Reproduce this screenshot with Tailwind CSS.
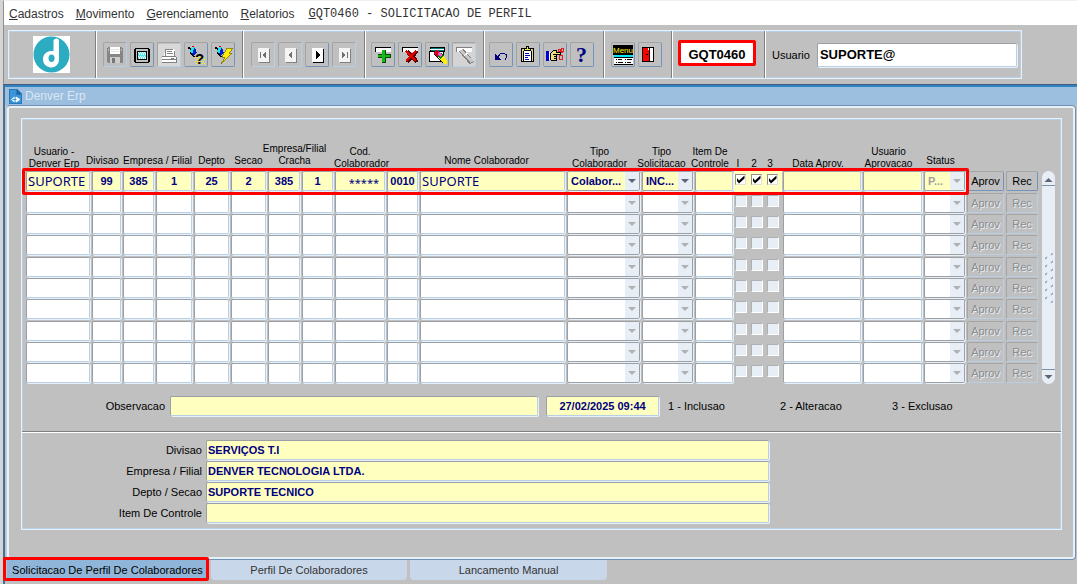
<!DOCTYPE html>
<html lang="pt-BR">
<head>
    <meta charset="UTF-8">
    <meta name="viewport" content="width=device-width, initial-scale=1.0">
    <title>Denver Erp</title>
    <script src="https://cdn.jsdelivr.net/npm/@tailwindcss/browser@4"></script>
</head>
<body class="flex min-h-screen flex-col border-l-3 border-[#d4d4d4] bg-[#c0c0c0] font-['Liberation_Sans',Arial,sans-serif] text-[11px] leading-3 text-black">
    <!-- Menu bar -->
    <nav class="flex h-[25px] items-center gap-3 border-t border-l border-t-[#f0f0f0] border-l-[#909090] bg-white pt-[2px] pl-[5px] text-[12px] leading-4 text-[#333]">
        <button type="button"><u>C</u>adastros</button>
        <button type="button"><u>M</u>ovimento</button>
        <button type="button"><u>G</u>erenciamento</button>
        <button type="button"><u>R</u>elatorios</button>
        <span class="pl-[2px] font-['Liberation_Mono',monospace]"><u>G</u>QT0460 - SOLICITACAO DE PERFIL</span>
    </nav>

    <!-- Toolbar -->
    <header class="flex h-[59px] border-l border-[#909090] pt-[5px] pl-1">
        <div class="flex h-[49px] items-stretch border border-[#e8f0f8] shadow-[inset_1px_1px_0_#b8cfe5,inset_-1px_-1px_0_#b8cfe5]">
            <div class="flex w-[86px] items-center justify-center pr-[2px]">
                <svg class="size-[37px]" viewBox="0 0 37 37">
                    <rect width="37" height="37" fill="#fff"/>
                    <circle cx="18.5" cy="18.5" r="18" fill="#2bacc0"/>
                    <path d="M20.500 5c0-1.500 1.500-2.500 3-2.500S26 3.500 26 5v18.500c0 4.500-3.500 8-8 8s-8-3.500-8-8.200 3.500-8.300 8-8.300c1 0 1.800.1 2.500.3zM18.500 18.500c-2 0-3 1.700-3 3.700 0 2.200 1.200 3.800 3 3.800 1.900 0 3.100-1.600 3.100-3.800s-1.200-3.700-3.100-3.700z" fill="#fff" fill-rule="evenodd"/>
                </svg>
            </div>

            <div class="flex items-center gap-[3px] border-l border-[#808080] px-[7px] shadow-[inset_1px_0_0_#fff]">
                <button type="button" aria-label="Salvar" disabled class="h-[25px] w-6 rounded-xs border border-[#a4a4a4] border-r-[#b8cfe5] border-b-[#b8cfe5]">
                    <svg class="size-[22px]" viewBox="0 0 22 22" shape-rendering="crispEdges">
                        <path d="M3 4h1V3h14v1h1v15H4v-1H3z" fill="#868686"/>
                        <path d="M6 3h10v7H6z" fill="#fff"/>
                        <path d="M7 5h8M7 7h8" stroke="#e4e4e4"/>
                        <path d="M6 13h10v6H6z" fill="#ccc"/>
                        <path d="M8 14h3v5H8z" fill="#777"/>
                        <path d="M4 5h1v2H4zM17 5h1v2h-1z" fill="#bbb"/>
                    </svg>
                </button>
                <button type="button" aria-label="Tela" class="h-[25px] w-6 rounded-xs border border-[#a4a4a4] border-r-[#7394b8] border-b-[#7394b8]">
                    <svg class="size-[22px]" viewBox="0 0 22 22" shape-rendering="crispEdges">
                        <path d="M4 4h14v1h1v13h-1v1H4v-1H3V5h1zM5 5v13h12V5z" fill="#000" fill-rule="evenodd"/>
                        <path d="M5 6h12v11H5z" fill="#c0c0c0"/>
                        <path d="M6 7h10v9H6z" fill="#000"/>
                        <path d="M7 8h8v7H7z" fill="#50e8f0"/>
                        <path d="M7 8.500h8M8 10.500h7M7 12.500h8M8 14.500h7M8 9.500h7M8 13.500h7" stroke="#fff" stroke-dasharray="1 1"/>
                    </svg>
                </button>
                <button type="button" aria-label="Imprimir" disabled class="h-[25px] w-6 rounded-xs border border-[#a4a4a4] border-r-[#b8cfe5] border-b-[#b8cfe5]">
                    <svg class="size-[22px]" viewBox="0 0 22 22" shape-rendering="crispEdges">
                        <path d="M0 0h22v22H0z" fill="#d8d8d8"/>
                        <path d="M7 5h8l2 2v6H6z" fill="#fff"/>
                        <path d="M7.500 5v7M7 5.500h8M16.500 7v5M9 7.500h5M9 9.500h6" fill="none" stroke="#888"/>
                        <path d="M4 13h15v5H4z" fill="#fff"/>
                        <path d="M4 12.500h14M4 15.500h14M4 18.500h15M18.500 13v5M13 14.500h3" stroke="#808080"/>
                    </svg>
                </button>
                <button type="button" aria-label="Entrar consulta" class="h-[25px] w-6 rounded-xs border border-[#a4a4a4] border-r-[#7394b8] border-b-[#7394b8]">
                    <svg class="size-[22px] overflow-visible" viewBox="0 0 22 22" shape-rendering="crispEdges">
                        <path d="M3 3h2v1h2v2H5V5H3z" fill="#000"/>
                        <path d="M6 6l4-2 2 5-4 3z" fill="#0020c8"/>
                        <path d="M6 4l4-1-3 7-2-2z" fill="#20e0f0"/>
                        <path d="M7 2h2v1H7z" fill="#e00000"/>
                        <path d="M5 8l3 4h2" fill="none" stroke="#000"/>
                        <path d="M10 13.500h10M11 15.500h10M10 17.500h10M11 19.500h10" stroke="#fff000" stroke-dasharray="1 1"/>
                        <text x="10" y="20" font-size="15" font-weight="bold" font-family="Liberation Sans">?</text>
                    </svg>
                </button>
                <button type="button" aria-label="Executar consulta" class="h-[25px] w-6 rounded-xs border border-[#a4a4a4] border-r-[#7394b8] border-b-[#7394b8]">
                    <svg class="size-[22px]" viewBox="0 0 22 22" shape-rendering="crispEdges">
                        <path d="M3 3h2v1h2v2H5V5H3z" fill="#000"/>
                        <path d="M6 6l4-2 2 5-4 3z" fill="#0020c8"/>
                        <path d="M6 4l4-1-3 7-2-2z" fill="#20e0f0"/>
                        <path d="M7 2h2v1H7z" fill="#e00000"/>
                        <path d="M5 8l3 4h2" fill="none" stroke="#000"/>
                        <path d="M15 4h6l-4 5h3L9 20l4-7h-3z" fill="#ffef00" stroke="#706800" stroke-width=".7"/>
                    </svg>
                </button>
            </div>

            <div class="flex items-center gap-[3px] border-l border-[#808080] pr-2 pl-[8px] shadow-[inset_1px_0_0_#fff]">
                <button type="button" aria-label="Primeiro" disabled class="h-[25px] w-6 rounded-xs border border-[#a4a4a4] border-r-[#b8cfe5] border-b-[#b8cfe5]">
                    <svg class="size-[22px]" viewBox="0 0 22 22" shape-rendering="crispEdges">
                        <path d="M7 5h11v14H7z" fill="#808080"/><path d="M6 4h11v14H6z" fill="#f4f4f4"/>
                        <path d="M8 8h1v6H8zM14 8v6h-1v-1h-1v-1h-1v-2h1V9h1V8z" fill="#707070"/>
                    </svg>
                </button>
                <button type="button" aria-label="Anterior" disabled class="h-[25px] w-6 rounded-xs border border-[#a4a4a4] border-r-[#b8cfe5] border-b-[#b8cfe5]">
                    <svg class="size-[22px]" viewBox="0 0 22 22" shape-rendering="crispEdges">
                        <path d="M7 5h11v14H7z" fill="#808080"/><path d="M6 4h11v14H6z" fill="#f4f4f4"/>
                        <path d="M13 8v6h-1v-1h-1v-1h-1v-2h1V9h1V8z" fill="#707070"/>
                    </svg>
                </button>
                <button type="button" aria-label="Proximo" class="h-[25px] w-6 rounded-xs border border-[#a4a4a4] border-r-[#7394b8] border-b-[#7394b8]">
                    <svg class="size-[22px]" viewBox="0 0 22 22" shape-rendering="crispEdges">
                        <path d="M7 5h11v14H7z" fill="#000"/><path d="M6 4h11v14H6z" fill="#fff"/>
                        <path d="M10 7v8h1v-1h1v-1h1v-1h1v-2h-1V9h-1V8h-1V7z" fill="#000"/>
                    </svg>
                </button>
                <button type="button" aria-label="Ultimo" disabled class="h-[25px] w-6 rounded-xs border border-[#a4a4a4] border-r-[#b8cfe5] border-b-[#b8cfe5]">
                    <svg class="size-[22px]" viewBox="0 0 22 22" shape-rendering="crispEdges">
                        <path d="M7 5h11v14H7z" fill="#808080"/><path d="M6 4h11v14H6z" fill="#f4f4f4"/>
                        <path d="M14 8h1v6h-1zM9 8v6h1v-1h1v-1h1v-2h-1V9h-1V8z" fill="#707070"/>
                    </svg>
                </button>
            </div>

            <div class="flex items-center gap-[3px] border-l border-[#808080] pr-[7px] pl-[6px] shadow-[inset_1px_0_0_#fff]">
                <button type="button" aria-label="Inserir" class="h-[25px] w-6 rounded-xs border border-[#a4a4a4] border-r-[#7394b8] border-b-[#7394b8]">
                    <svg class="size-[22px]" viewBox="0 0 22 22" shape-rendering="crispEdges">
                        <path d="M3 3h16v5H3z" fill="#000"/><path d="M4 4h15v4H4z" fill="#fff"/>
                        <path d="M10 6h4v4h5v4h-5v5h-4v-5H6v-4h4z" fill="#004800"/>
                        <path d="M10 6h3v5h5v2h-5v5h-3v-5H6v-2h4z" fill="#18b818"/>
                    </svg>
                </button>
                <button type="button" aria-label="Excluir" class="h-[25px] w-6 rounded-xs border border-[#a4a4a4] border-r-[#7394b8] border-b-[#7394b8]">
                    <svg class="size-[22px]" viewBox="0 0 22 22" shape-rendering="crispEdges">
                        <path d="M3 3h16v5H3z" fill="#000"/><path d="M4 4h15v4H4z" fill="#fff"/>
                        <path d="M8 7l10 11M18 7L8 18" stroke="#600000" stroke-width="4"/>
                        <path d="M7 7l10 10M17 7L7 17" stroke="#e00000" stroke-width="2"/>
                    </svg>
                </button>
                <button type="button" aria-label="Limpar" class="h-[25px] w-6 rounded-xs border border-[#a4a4a4] border-r-[#7394b8] border-b-[#7394b8]">
                    <svg class="size-[22px]" viewBox="0 0 22 22" shape-rendering="crispEdges">
                        <path d="M4.500 3.500h14v4h-14z" fill="#008080" stroke="#000"/>
                        <path d="M3.500 7.500h14v10h-14z" fill="#fff" stroke="#000"/>
                        <path d="M4 5.500h14" stroke="#fff"/>
                        <path d="M8 8l3-2 4 3-3 4-4-3z" fill="#d00028"/>
                        <path d="M11 12l4-4 3 4-3 4z" fill="#008000"/><path d="M11 10l2-2 3 3-2 2z" fill="#ff50d0"/>
                        <path d="M14 15l4-3 3 5v3h-3z" fill="#fff000"/>
                        <path d="M8 10l5 5 4 4" fill="none" stroke="#000"/>
                    </svg>
                </button>
                <button type="button" aria-label="Editar" disabled class="h-[25px] w-6 rounded-xs border border-[#a4a4a4] border-r-[#b8cfe5] border-b-[#b8cfe5]">
                    <svg class="size-[22px]" viewBox="0 0 22 22" shape-rendering="crispEdges">
                        <path d="M0 0h22v22H0z" fill="#d4d4d4"/>
                        <path d="M3 3h16v5H3z" fill="#808080"/><path d="M4 4h15v4H4z" fill="#fff"/>
                        <path d="M8 6l11 13" stroke="#808080" stroke-width="5"/>
                        <path d="M8 6l11 12" stroke="#c8c8c8" stroke-width="3"/>
                        <path d="M11 12l4-3" stroke="#fff"/>
                    </svg>
                </button>
            </div>

            <div class="flex items-center gap-[3px] border-l border-[#808080] pr-[9px] pl-[5px] shadow-[inset_1px_0_0_#fff]">
                <button type="button" aria-label="Desfazer" class="h-[25px] w-6 rounded-xs border border-[#a4a4a4] border-r-[#7394b8] border-b-[#7394b8]">
                    <svg class="size-[22px]" viewBox="0 0 22 22" shape-rendering="crispEdges">
                        <path d="M5 10v6h6l-2-2-2-2z" fill="#000080"/>
                        <path d="M8 12.500l2-2M10 9.500h5M15 10.500h2M16.500 11v3M15.500 14v2" fill="none" stroke="#000080"/>
                    </svg>
                </button>
                <button type="button" aria-label="Lista" class="h-[25px] w-6 rounded-xs border border-[#a4a4a4] border-r-[#7394b8] border-b-[#7394b8]">
                    <svg class="size-[22px]" viewBox="0 0 22 22" shape-rendering="crispEdges">
                        <path d="M4.500 4.500h12v13h-12z" fill="#e0d890" stroke="#000"/>
                        <path d="M6 7h9v10H6z" fill="#fff"/><path d="M6.500 7v10M14.500 7v10" stroke="#000"/>
                        <path d="M7.500 6.500v-2h2v-2h2v2h2v2z" fill="#f0e868" stroke="#000"/>
                        <path d="M8 9.500h4M8 11.500h5M8 13.500h3M8 15.500h4" stroke="#0000c0"/>
                    </svg>
                </button>
                <button type="button" aria-label="Chave" class="h-[25px] w-6 rounded-xs border border-[#a4a4a4] border-r-[#7394b8] border-b-[#7394b8]">
                    <svg class="size-[22px]" viewBox="0 0 22 22" shape-rendering="crispEdges">
                        <path d="M2 7h3v10H2z" fill="#0000d0"/><path d="M5 8h1v8H5z" fill="#fff"/>
                        <path d="M6.500 9.500l3-3h3v2h4v2h-4v6h-5l-1-1z" fill="#f0e080" stroke="#000"/>
                        <path d="M9 10.500h4M10 12.500h3M10 14.500h3" stroke="#000"/>
                        <path d="M14.500 5.500h2v2h-2zM17 8.500h2M17.500 4.500h2v3h-2zM15.500 11.500h3v4h-3z" fill="none" stroke="#e02020"/>
                    </svg>
                </button>
                <button type="button" aria-label="Ajuda" class="h-[25px] w-6 rounded-xs border border-[#a4a4a4] border-r-[#7394b8] border-b-[#7394b8]">
                    <svg class="size-[22px] overflow-visible" viewBox="0 0 22 22">
                        <text x="5" y="18" font-size="22" font-weight="bold" font-family="Liberation Serif" fill="#000080">?</text>
                    </svg>
                </button>
            </div>

            <div class="flex items-center gap-[3px] border-l border-[#808080] pr-[9px] pl-[7px] shadow-[inset_1px_0_0_#fff]">
                <button type="button" aria-label="Menu" class="h-[25px] w-6 rounded-xs border border-[#a4a4a4] border-r-[#7394b8] border-b-[#7394b8]">
                    <svg class="size-[22px] overflow-visible" viewBox="0 0 22 22" shape-rendering="crispEdges">
                        <path d="M1 1h20v10H1z" fill="#000"/>
                        <text x="1" y="9" font-size="8" font-family="Liberation Sans" fill="#fff000">Menu</text>
                        <path d="M2 11h19v2H2z" fill="#00e8f0"/><path d="M2 13h19v8H2z" fill="#fff"/>
                        <path d="M2 13.500h19M4 15.500h1M6 15.500h4M13 15.500h1M15 15.500h5M4 18.500h1M6 18.500h5M13 18.500h1M15 18.500h4M2 20.500h19" stroke="#000"/>
                    </svg>
                </button>
                <button type="button" aria-label="Sair" class="h-[25px] w-6 rounded-xs border border-[#a4a4a4] border-r-[#7394b8] border-b-[#7394b8]">
                    <svg class="size-[22px]" viewBox="0 0 22 22" shape-rendering="crispEdges">
                        <path d="M3.500 3.500h11v14h-11z" fill="#fff" stroke="#000"/>
                        <path d="M3 4h6v2h1v12H8v-1H3z" fill="#ff0000"/>
                        <path d="M3.500 4v13M3 17.500h7M10.500 4v14M7 10.500h2" stroke="#000"/>
                    </svg>
                </button>
            </div>

            <div class="flex w-[93px] items-center border-l border-[#808080] pb-1 pl-[6px] shadow-[inset_1px_0_0_#fff]">
                <input type="text" aria-label="Programa" value="GQT0460" class="h-[26px] w-[78px] rounded-xs border-3 border-[#ff0000] bg-white pt-[3px] text-center text-[13px] font-bold outline-none">
            </div>

            <div class="flex items-center gap-[7px] border-l border-[#808080] px-1 pl-[7px] shadow-[inset_1px_0_0_#fff]">
                <label for="usuario">Usuario</label>
                <input id="usuario" type="text" value="SUPORTE@" class="h-6 w-50 rounded-xs border border-[#9aa0a6] border-r-[#b8cfe5] border-b-[#b8cfe5] bg-white pl-[2px] text-[13px] font-bold shadow-[1px_1px_0_#e8f0f8] outline-none">
            </div>
        </div>
    </header>

    <!-- Window -->
    <main class="flex flex-1 flex-col border-t border-l-2 border-t-[#4a5a78] border-l-[#44709f]">
        <div class="flex h-5 items-center gap-[3px] border-t-2 border-[#2f82c4] bg-[#9dbfdf] pl-[4px] text-[12px] leading-4 text-[#d8e6f4]">
            <svg class="h-[15px] w-[13px]" viewBox="0 0 13 15">
                <path d="M0 0h8l5 5v10H0z" fill="#2878b8"/><path d="M1 1h6v5h5v8H1z" fill="#3c94d8"/><path d="M8 0l5 5H8z" fill="#1868a8"/>
                <path d="M5.500 8l-3 2.500 3 2.500M7 8l4 2.500L7 13z" fill="#fff" stroke="#fff" stroke-width=".8"/><path d="M3.500 10.500h4" stroke="#3c94d8"/>
            </svg>
            <h1>Denver Erp</h1>
        </div>

        <div class="mx-px rounded-sm border border-[#6f93b8] border-l-[#b8cfe5] pb-[29px] shadow-[inset_0_0_0_2px_#e8f0f8]">
            <section class="mt-3 mr-[13px] ml-[14px] border border-[#e8f0f8] shadow-[inset_1px_1px_0_#b8cfe5,inset_-1px_-1px_0_#b8cfe5]">
                <div class="flex items-end pt-[22px] pr-[6px] pl-[3px]">
                    <div class="relative min-w-0 flex-1">
                        <table class="w-full table-fixed border-separate border-spacing-0">
                            <colgroup>
                                <col class="w-[66px]"><col class="w-[31px]"><col class="w-[33px]"><col class="w-[38px]"><col class="w-[37px]"><col class="w-[37px]">
                                <col class="w-[34px]"><col class="w-[33px]"><col class="w-[52px]"><col class="w-[33px]"><col>
                                <col class="w-[75px]"><col class="w-[53px]"><col class="w-[40px]"><col class="w-4"><col class="w-4"><col class="w-4">
                                <col class="w-[80px]"><col class="w-[61px]"><col class="w-[43px]"><col class="w-[39px]"><col class="w-[34px]">
                            </colgroup>
                            <thead class="text-[10px] whitespace-nowrap">
                                <tr class="h-[29px] *:p-0 *:align-bottom *:font-normal">
                                    <th><div class="-ml-2">Usuario -<br>Denver Erp</div></th>
                                    <th><div class="-ml-2 pb-[3px]">Divisao</div></th>
                                    <th colspan="2"><div class="pb-[3px]">Empresa / Filial</div></th>
                                    <th><div class="pb-[3px]">Depto</div></th>
                                    <th><div class="pb-[3px]">Secao</div></th>
                                    <th colspan="2"><div class="-ml-3 pb-[3px]">Empresa/Filial<br>Cracha</div></th>
                                    <th><div>Cod.<br>Colaborador</div></th>
                                    <th></th>
                                    <th><div class="-ml-3 pb-[3px]">Nome Colaborador</div></th>
                                    <th><div class="-ml-2">Tipo<br>Colaborador</div></th>
                                    <th><div class="-ml-3">Tipo<br>Solicitacao</div></th>
                                    <th><div class="-ml-2">Item De<br>Controle</div></th>
                                    <th><div class="-ml-2">I</div></th>
                                    <th><div class="-ml-2">2</div></th>
                                    <th><div class="-ml-2">3</div></th>
                                    <th><div class="-ml-2">Data Aprov.</div></th>
                                    <th><div class="-ml-2">Usuario<br>Aprovacao</div></th>
                                    <th><div class="-ml-2 pb-[3px]">Status</div></th>
                                    <th colspan="2"></th>
                                </tr>
                            </thead>
                            <tbody id="linhas" class="text-[#000080]">
                                <tr class="h-[22px] *:px-px *:py-0">
                                    <td><input aria-label="Usuario" value="SUPORTE" class="block h-5 w-full rounded-xs border border-[#9aa0a6] border-r-[#b8cfe5] border-b-[#b8cfe5] bg-[#ffffc0] pl-px font-['Noto_Sans',sans-serif] text-[13px] shadow-[1px_1px_0_#e8f0f8] outline-none"></td>
                                    <td><input aria-label="Divisao" value="99" class="block h-5 w-full rounded-xs border border-[#9aa0a6] border-r-[#b8cfe5] border-b-[#b8cfe5] bg-[#ffffc0] text-center font-bold shadow-[1px_1px_0_#e8f0f8] outline-none"></td>
                                    <td><input aria-label="Empresa" value="385" class="block h-5 w-full rounded-xs border border-[#9aa0a6] border-r-[#b8cfe5] border-b-[#b8cfe5] bg-[#ffffc0] text-center font-bold shadow-[1px_1px_0_#e8f0f8] outline-none"></td>
                                    <td><input aria-label="Filial" value="1" class="block h-5 w-full rounded-xs border border-[#9aa0a6] border-r-[#b8cfe5] border-b-[#b8cfe5] bg-[#ffffc0] text-center font-bold shadow-[1px_1px_0_#e8f0f8] outline-none"></td>
                                    <td><input aria-label="Depto" value="25" class="block h-5 w-full rounded-xs border border-[#9aa0a6] border-r-[#b8cfe5] border-b-[#b8cfe5] bg-[#ffffc0] text-center font-bold shadow-[1px_1px_0_#e8f0f8] outline-none"></td>
                                    <td><input aria-label="Secao" value="2" class="block h-5 w-full rounded-xs border border-[#9aa0a6] border-r-[#b8cfe5] border-b-[#b8cfe5] bg-[#ffffc0] text-center font-bold shadow-[1px_1px_0_#e8f0f8] outline-none"></td>
                                    <td><input aria-label="Empresa cracha" value="385" class="block h-5 w-full rounded-xs border border-[#9aa0a6] border-r-[#b8cfe5] border-b-[#b8cfe5] bg-[#ffffc0] text-center font-bold shadow-[1px_1px_0_#e8f0f8] outline-none"></td>
                                    <td><input aria-label="Filial cracha" value="1" class="block h-5 w-full rounded-xs border border-[#9aa0a6] border-r-[#b8cfe5] border-b-[#b8cfe5] bg-[#ffffc0] text-center font-bold shadow-[1px_1px_0_#e8f0f8] outline-none"></td>
                                    <td><input aria-label="Cod. Colaborador" value="*****" class="block h-5 w-full rounded-xs border border-[#9aa0a6] border-r-[#b8cfe5] border-b-[#b8cfe5] bg-[#ffffc0] pt-[2px] pr-[5px] text-right font-['Noto_Sans',sans-serif] text-[11px] shadow-[1px_1px_0_#e8f0f8] outline-none"></td>
                                    <td><input aria-label="Digito" value="0010" class="block h-5 w-full rounded-xs border border-[#9aa0a6] border-r-[#b8cfe5] border-b-[#b8cfe5] bg-[#ffffc0] text-center font-bold shadow-[1px_1px_0_#e8f0f8] outline-none"></td>
                                    <td><input aria-label="Nome Colaborador" value="SUPORTE" class="block h-5 w-full rounded-xs border border-[#9aa0a6] border-r-[#b8cfe5] border-b-[#b8cfe5] bg-[#ffffc0] pl-px font-['Noto_Sans',sans-serif] text-[13px] shadow-[1px_1px_0_#e8f0f8] outline-none"></td>
                                    <td>
                                        <div class="flex h-5 rounded-xs border border-[#9aa0a6] bg-[#ffffc0] shadow-[1px_1px_0_#e8f0f8]">
                                            <select aria-label="Tipo Colaborador" class="min-w-0 flex-1 appearance-none pl-[3px] font-bold outline-none"><option>Colabor...</option></select>
                                            <svg class="h-full w-[14px] bg-[#e8eef6]" viewBox="0 0 14 18"><path d="M3 7h8l-4 4z" fill="#5c6478"/></svg>
                                        </div>
                                    </td>
                                    <td>
                                        <div class="flex h-5 rounded-xs border border-[#9aa0a6] bg-[#ffffc0] shadow-[1px_1px_0_#e8f0f8]">
                                            <select aria-label="Tipo Solicitacao" class="min-w-0 flex-1 appearance-none pl-[3px] font-bold outline-none"><option>INC...</option></select>
                                            <svg class="h-full w-[14px] bg-[#e8eef6]" viewBox="0 0 14 18"><path d="M3 7h8l-4 4z" fill="#5c6478"/></svg>
                                        </div>
                                    </td>
                                    <td><input aria-label="Item De Controle" class="block h-5 w-full rounded-xs border border-[#9aa0a6] border-r-[#b8cfe5] border-b-[#b8cfe5] bg-[#ffffc0] shadow-[1px_1px_0_#e8f0f8] outline-none"></td>
                                    <td class="bg-[#ffffc0] align-top">
                                        <div class="grid pt-1">
                                            <input type="checkbox" aria-label="Inclusao" checked class="col-start-1 row-start-1 size-[11px] appearance-none border border-[#909090] border-r-[#e0e0e0] border-b-[#e0e0e0] bg-white">
                                            <svg class="pointer-events-none col-start-1 row-start-1 size-[11px]" viewBox="0 0 11 11"><path d="M2 4v3l2 2.500 5.500-5V1.500l-5.500 5z" fill="#000"/></svg>
                                        </div>
                                    </td>
                                    <td class="bg-[#ffffc0] align-top">
                                        <div class="grid pt-1">
                                            <input type="checkbox" aria-label="Alteracao" checked class="col-start-1 row-start-1 size-[11px] appearance-none border border-[#909090] border-r-[#e0e0e0] border-b-[#e0e0e0] bg-white">
                                            <svg class="pointer-events-none col-start-1 row-start-1 size-[11px]" viewBox="0 0 11 11"><path d="M2 4v3l2 2.500 5.500-5V1.500l-5.500 5z" fill="#000"/></svg>
                                        </div>
                                    </td>
                                    <td class="bg-[#ffffc0] align-top">
                                        <div class="grid pt-1">
                                            <input type="checkbox" aria-label="Exclusao" checked class="col-start-1 row-start-1 size-[11px] appearance-none border border-[#909090] border-r-[#e0e0e0] border-b-[#e0e0e0] bg-white">
                                            <svg class="pointer-events-none col-start-1 row-start-1 size-[11px]" viewBox="0 0 11 11"><path d="M2 4v3l2 2.500 5.500-5V1.500l-5.500 5z" fill="#000"/></svg>
                                        </div>
                                    </td>
                                    <td><input aria-label="Data Aprov." class="block h-5 w-full rounded-xs border border-[#9aa0a6] border-r-[#b8cfe5] border-b-[#b8cfe5] bg-[#ffffc0] shadow-[1px_1px_0_#e8f0f8] outline-none"></td>
                                    <td><input aria-label="Usuario Aprovacao" class="block h-5 w-full rounded-xs border border-[#9aa0a6] border-r-[#b8cfe5] border-b-[#b8cfe5] bg-[#ffffc0] shadow-[1px_1px_0_#e8f0f8] outline-none"></td>
                                    <td>
                                        <div class="flex h-5 rounded-xs border border-[#9aa0a6] bg-[#ffffc0] shadow-[1px_1px_0_#e8f0f8]">
                                            <select aria-label="Status" class="min-w-0 flex-1 appearance-none pl-[3px] font-bold text-[#a0a0a0] outline-none"><option>P...</option></select>
                                            <svg class="h-full w-[14px] bg-[#e8eef6]" viewBox="0 0 14 18"><path d="M3 7h8l-4 4z" fill="#b0b0b0"/></svg>
                                        </div>
                                    </td>
                                    <td class="pl-[2px]"><button type="button" class="block h-5 w-full rounded-xs border border-[#a4a4a4] border-r-[#7394b8] border-b-[#7394b8] text-black">Aprov</button></td>
                                    <td><button type="button" class="block h-5 w-full rounded-xs border border-[#a4a4a4] border-r-[#7394b8] border-b-[#7394b8] text-black">Rec</button></td>
                                </tr>
                            </tbody>
                        </table>
                        <div class="pointer-events-none absolute top-[27px] right-[70px] -left-[3px] h-[27px] rounded-xs border-3 border-[#ff0000]"></div>
                    </div>

                    <!-- Scroll bar -->
                    <div class="ml-[3px] flex h-[213px] w-[13px] flex-col overflow-hidden rounded-full bg-[#e8eef6]">
                        <button type="button" aria-label="Subir" class="h-[15px] border-b border-[#8090a8]">
                            <svg class="h-[13px] w-[13px]" viewBox="0 0 13 13"><path d="M2.500 10h8l-4-4z" fill="#5c6478"/></svg>
                        </button>
                        <div class="flex flex-1 items-center justify-center">
                            <svg class="h-[50px] w-2" viewBox="0 0 8 50">
                                <path d="M0 6l2-2M6 2l2-2M0 14l2-2M6 10l2-2M0 22l2-2M6 18l2-2M0 30l2-2M6 26l2-2M0 38l2-2M6 34l2-2M0 46l2-2M6 42l2-2M6 50l2-2" stroke="#8c9cb4" stroke-width="1.200"/>
                            </svg>
                        </div>
                        <button type="button" aria-label="Descer" class="h-[15px] border-t border-[#8090a8]">
                            <svg class="h-[13px] w-[13px]" viewBox="0 0 13 13"><path d="M2.500 4h8l-4 4z" fill="#5c6478"/></svg>
                        </button>
                    </div>
                </div>

                <div class="flex h-[47px] items-center pr-2 pb-1">
                    <label for="observacao" class="w-[143px] text-right">Observacao</label>
                    <input id="observacao" class="ml-[5px] h-5 w-[368px] rounded-xs border border-[#9aa0a6] border-r-[#b8cfe5] border-b-[#b8cfe5] bg-[#ffffc0] shadow-[1px_1px_0_#e8f0f8] outline-none">
                    <input aria-label="Data" value="27/02/2025 09:44" class="ml-2 h-5 w-[113px] rounded-xs border border-[#9aa0a6] border-r-[#b8cfe5] border-b-[#b8cfe5] bg-[#ffffc0] text-center font-bold text-[#000080] shadow-[1px_1px_0_#e8f0f8] outline-none">
                    <span class="ml-[9px] w-28">1 - Inclusao</span>
                    <span class="w-28">2 - Alteracao</span>
                    <span class="w-28">3 - Exclusao</span>
                </div>

                <div class="grid grid-cols-[180px_563px] items-center gap-x-1 gap-y-px border-t border-[#808080] pt-2 pb-[6px] shadow-[inset_0_1px_0_#fff]">
                    <label for="divisao" class="text-right">Divisao</label>
                    <input id="divisao" value="SERVIÇOS T.I" class="h-5 rounded-xs border border-[#9aa0a6] border-r-[#b8cfe5] border-b-[#b8cfe5] bg-[#ffffc0] pl-px font-bold text-[#000080] shadow-[1px_1px_0_#e8f0f8] outline-none">
                    <label for="empresa" class="text-right">Empresa / Filial</label>
                    <input id="empresa" value="DENVER TECNOLOGIA LTDA." class="h-5 rounded-xs border border-[#9aa0a6] border-r-[#b8cfe5] border-b-[#b8cfe5] bg-[#ffffc0] pl-px font-bold text-[#000080] shadow-[1px_1px_0_#e8f0f8] outline-none">
                    <label for="depto" class="text-right">Depto / Secao</label>
                    <input id="depto" value="SUPORTE TECNICO" class="h-5 rounded-xs border border-[#9aa0a6] border-r-[#b8cfe5] border-b-[#b8cfe5] bg-[#ffffc0] pl-px font-bold text-[#000080] shadow-[1px_1px_0_#e8f0f8] outline-none">
                    <label for="item" class="text-right">Item De Controle</label>
                    <input id="item" class="h-5 rounded-xs border border-[#9aa0a6] border-r-[#b8cfe5] border-b-[#b8cfe5] bg-[#ffffc0] pl-px font-bold text-[#000080] shadow-[1px_1px_0_#e8f0f8] outline-none">
                </div>
            </section>
        </div>

        <!-- Tabs -->
        <div class="relative flex items-start gap-[3px] pl-[2px] text-[#333]" role="tablist">
            <button type="button" role="tab" aria-selected="true" class="h-5 w-[201px] bg-[#8fb5d8] text-black">Solicitacao De Perfil De Colaboradores</button>
            <button type="button" role="tab" class="h-5 w-[196px] rounded-b-sm bg-[#c8d7ea]">Perfil De Colaboradores</button>
            <button type="button" role="tab" class="h-5 w-[197px] rounded-b-sm bg-[#c8d7ea]">Lancamento Manual</button>
            <div class="pointer-events-none absolute -top-[3px] -left-[2px] h-6 w-[206px] rounded-xs border-3 border-[#ff0000]"></div>
        </div>
    </main>

    <template id="linha-vazia">
        <tr class="*:px-px *:py-0">
            <td><input aria-label="Usuario" class="block h-5 w-full rounded-xs border border-[#9aa0a6] border-r-[#b8cfe5] border-b-[#b8cfe5] bg-white shadow-[1px_1px_0_#e8f0f8] outline-none"></td>
            <td><input aria-label="Divisao" class="block h-5 w-full rounded-xs border border-[#9aa0a6] border-r-[#b8cfe5] border-b-[#b8cfe5] bg-white shadow-[1px_1px_0_#e8f0f8] outline-none"></td>
            <td><input aria-label="Empresa" class="block h-5 w-full rounded-xs border border-[#9aa0a6] border-r-[#b8cfe5] border-b-[#b8cfe5] bg-white shadow-[1px_1px_0_#e8f0f8] outline-none"></td>
            <td><input aria-label="Filial" class="block h-5 w-full rounded-xs border border-[#9aa0a6] border-r-[#b8cfe5] border-b-[#b8cfe5] bg-white shadow-[1px_1px_0_#e8f0f8] outline-none"></td>
            <td><input aria-label="Depto" class="block h-5 w-full rounded-xs border border-[#9aa0a6] border-r-[#b8cfe5] border-b-[#b8cfe5] bg-white shadow-[1px_1px_0_#e8f0f8] outline-none"></td>
            <td><input aria-label="Secao" class="block h-5 w-full rounded-xs border border-[#9aa0a6] border-r-[#b8cfe5] border-b-[#b8cfe5] bg-white shadow-[1px_1px_0_#e8f0f8] outline-none"></td>
            <td><input aria-label="Empresa cracha" class="block h-5 w-full rounded-xs border border-[#9aa0a6] border-r-[#b8cfe5] border-b-[#b8cfe5] bg-white shadow-[1px_1px_0_#e8f0f8] outline-none"></td>
            <td><input aria-label="Filial cracha" class="block h-5 w-full rounded-xs border border-[#9aa0a6] border-r-[#b8cfe5] border-b-[#b8cfe5] bg-white shadow-[1px_1px_0_#e8f0f8] outline-none"></td>
            <td><input aria-label="Cod. Colaborador" class="block h-5 w-full rounded-xs border border-[#9aa0a6] border-r-[#b8cfe5] border-b-[#b8cfe5] bg-white shadow-[1px_1px_0_#e8f0f8] outline-none"></td>
            <td><input aria-label="Digito" class="block h-5 w-full rounded-xs border border-[#9aa0a6] border-r-[#b8cfe5] border-b-[#b8cfe5] bg-white shadow-[1px_1px_0_#e8f0f8] outline-none"></td>
            <td><input aria-label="Nome Colaborador" class="block h-5 w-full rounded-xs border border-[#9aa0a6] border-r-[#b8cfe5] border-b-[#b8cfe5] bg-white shadow-[1px_1px_0_#e8f0f8] outline-none"></td>
            <td>
                <div class="flex h-5 rounded-xs border border-[#9aa0a6] bg-white shadow-[1px_1px_0_#e8f0f8]">
                    <select aria-label="Tipo Colaborador" disabled class="min-w-0 flex-1 appearance-none"></select>
                    <svg class="h-full w-[14px] bg-[#e8eef6]" viewBox="0 0 14 18"><path d="M3 7h8l-4 4z" fill="#b0b0b0"/></svg>
                </div>
            </td>
            <td>
                <div class="flex h-5 rounded-xs border border-[#9aa0a6] bg-white shadow-[1px_1px_0_#e8f0f8]">
                    <select aria-label="Tipo Solicitacao" disabled class="min-w-0 flex-1 appearance-none"></select>
                    <svg class="h-full w-[14px] bg-[#e8eef6]" viewBox="0 0 14 18"><path d="M3 7h8l-4 4z" fill="#b0b0b0"/></svg>
                </div>
            </td>
            <td><input aria-label="Item De Controle" class="block h-5 w-full rounded-xs border border-[#9aa0a6] border-r-[#b8cfe5] border-b-[#b8cfe5] bg-white shadow-[1px_1px_0_#e8f0f8] outline-none"></td>
            <td class="align-top"><input type="checkbox" aria-label="Inclusao" disabled class="mt-[3px] block size-3 appearance-none border border-[#b0b0b0] border-r-white border-b-white bg-[#e8eef6]"></td>
            <td class="align-top"><input type="checkbox" aria-label="Alteracao" disabled class="mt-[3px] block size-3 appearance-none border border-[#b0b0b0] border-r-white border-b-white bg-[#e8eef6]"></td>
            <td class="align-top"><input type="checkbox" aria-label="Exclusao" disabled class="mt-[3px] block size-3 appearance-none border border-[#b0b0b0] border-r-white border-b-white bg-[#e8eef6]"></td>
            <td><input aria-label="Data Aprov." class="block h-5 w-full rounded-xs border border-[#9aa0a6] border-r-[#b8cfe5] border-b-[#b8cfe5] bg-white shadow-[1px_1px_0_#e8f0f8] outline-none"></td>
            <td><input aria-label="Usuario Aprovacao" class="block h-5 w-full rounded-xs border border-[#9aa0a6] border-r-[#b8cfe5] border-b-[#b8cfe5] bg-white shadow-[1px_1px_0_#e8f0f8] outline-none"></td>
            <td>
                <div class="flex h-5 rounded-xs border border-[#9aa0a6] bg-white shadow-[1px_1px_0_#e8f0f8]">
                    <select aria-label="Status" disabled class="min-w-0 flex-1 appearance-none"></select>
                    <svg class="h-full w-[14px] bg-[#e8eef6]" viewBox="0 0 14 18"><path d="M3 7h8l-4 4z" fill="#b0b0b0"/></svg>
                </div>
            </td>
            <td class="pl-[2px]"><button type="button" disabled class="block h-5 w-full rounded-xs border border-[#a4a4a4] border-r-[#b8cfe5] border-b-[#b8cfe5] text-[#8c8c8c] text-shadow-[1px_1px_0_#e8f0f8]">Aprov</button></td>
            <td><button type="button" disabled class="block h-5 w-full rounded-xs border border-[#a4a4a4] border-r-[#b8cfe5] border-b-[#b8cfe5] text-[#8c8c8c] text-shadow-[1px_1px_0_#e8f0f8]">Rec</button></td>
        </tr>
    </template>

    <script>
        // Empty rows below the current record
        const linhas = document.getElementById('linhas');
        const vazia = document.getElementById('linha-vazia');

        for (let i = 1; i < 10; i++) {
            const linha = vazia.content.cloneNode(true);
            // every third row is one pixel taller
            linha.querySelector('tr').classList.add(i % 3 === 0 ? 'h-[22px]' : 'h-[21px]');
            linhas.appendChild(linha);
        }
    </script>
</body>
</html>
